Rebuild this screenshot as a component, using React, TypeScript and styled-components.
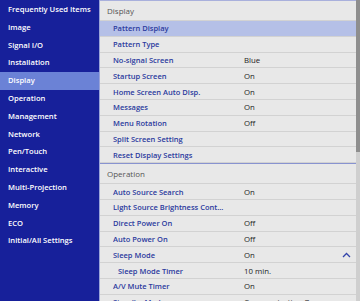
import React from "react";
import styled, { createGlobalStyle } from "styled-components";

const Global = createGlobalStyle`
  html, body { margin: 0; padding: 0; }
  body { width: 360px; height: 301px; overflow: hidden; font-family: "Open Sans", "Noto Sans", sans-serif; }
`;

const Screen = styled.div`
  display: flex;
  width: 360px;
  height: 301px;
  overflow: hidden;
  background: #e8e8e8;
`;

const Sidebar = styled.nav`
  width: 99px;
  flex: none;
  background: #17209a;
  border-right: 1px solid #9aa4d8;
  display: flex;
  flex-direction: column;
  padding-top: 1px;
`;

const NavItem = styled.div<{ $active?: boolean }>`
  height: 17.8px;
  line-height: 17.8px;
  padding-left: 8px;
  font-size: 7.6px;
  font-weight: 600;
  color: #ffffff;
  white-space: nowrap;
  background: ${(p) => (p.$active ? "#6b82d6" : "transparent")};
`;

const Panel = styled.div`
  flex: 1;
  display: flex;
  flex-direction: column;
  border-top: 1px solid #a9b0dc;
  overflow: hidden;
`;

const SectionHeader = styled.div<{ $topRule?: boolean }>`
  height: 19px;
  line-height: 19px;
  padding-left: 7px;
  font-size: 8px;
  color: #555555;
  border-bottom: 1px solid #d2d2d2;
  border-top: ${(p) => (p.$topRule ? "1px solid #8893d0" : "none")};
  flex: none;
`;

const Row = styled.div<{ $selected?: boolean }>`
  height: 14.8px;
  flex: none;
  display: grid;
  grid-template-columns: 131px 1fr 20px;
  align-items: center;
  border-bottom: 1px solid #d2d2d2;
  background: ${(p) => (p.$selected ? "#b5c0e7" : "transparent")};
  padding-left: 13px;
  font-size: 7.5px;
  font-weight: 600;
  color: #2b3a9e;
  white-space: nowrap;
`;

const Label = styled.span<{ $indent?: boolean }>`
  overflow: hidden;
  padding-left: ${(p) => (p.$indent ? "5px" : "0")};
`;

const Value = styled.span`
  color: #222222;
  font-weight: 500;
  font-size: 7.8px;
`;

const Caret = styled.span`
  display: flex;
  justify-content: center;
`;

const ScrollBar = styled.div`
  width: 4px;
  flex: none;
  background: #cfcfcf;
  display: flex;
  flex-direction: column;
`;

const Thumb = styled.div`
  height: 152px;
  background: #8e8e8e;
`;

const sidebar = [
  "Frequently Used Items",
  "Image",
  "Signal I/O",
  "Installation",
  "Display",
  "Operation",
  "Management",
  "Network",
  "Pen/Touch",
  "Interactive",
  "Multi-Projection",
  "Memory",
  "ECO",
  "Initial/All Settings",
];

type Item = { label: string; value?: string; selected?: boolean; indent?: boolean; caret?: boolean };

const display: Item[] = [
  { label: "Pattern Display", selected: true },
  { label: "Pattern Type" },
  { label: "No-signal Screen", value: "Blue" },
  { label: "Startup Screen", value: "On" },
  { label: "Home Screen Auto Disp.", value: "On" },
  { label: "Messages", value: "On" },
  { label: "Menu Rotation", value: "Off" },
  { label: "Split Screen Setting" },
  { label: "Reset Display Settings" },
];

const operation: Item[] = [
  { label: "Auto Source Search", value: "On" },
  { label: "Light Source Brightness Cont..." },
  { label: "Direct Power On", value: "Off" },
  { label: "Auto Power On", value: "Off" },
  { label: "Sleep Mode", value: "On", caret: true },
  { label: "Sleep Mode Timer", value: "10 min.", indent: true },
  { label: "A/V Mute Timer", value: "On" },
  { label: "Standby Mode", value: "Communication On" },
];

const CaretIcon = () => (
  <svg width="9" height="6" viewBox="0 0 9 6">
    <path d="M1 5 L4.5 1.5 L8 5" fill="none" stroke="#3344aa" strokeWidth="1.3" />
  </svg>
);

const renderRow = (it: Item) => (
  <Row key={it.label} $selected={it.selected}>
    <Label $indent={it.indent}>{it.label}</Label>
    <Value>{it.value ?? ""}</Value>
    <Caret>{it.caret ? <CaretIcon /> : null}</Caret>
  </Row>
);

export default function App() {
  return (
    <Screen>
      <Global />
      <Sidebar>
        {sidebar.map((s) => (
          <NavItem key={s} $active={s === "Display"}>
            {s}
          </NavItem>
        ))}
      </Sidebar>
      <Panel>
        <SectionHeader>Display</SectionHeader>
        {display.map(renderRow)}
        <SectionHeader $topRule>Operation</SectionHeader>
        {operation.map(renderRow)}
      </Panel>
      <ScrollBar>
        <Thumb />
      </ScrollBar>
    </Screen>
  );
}
